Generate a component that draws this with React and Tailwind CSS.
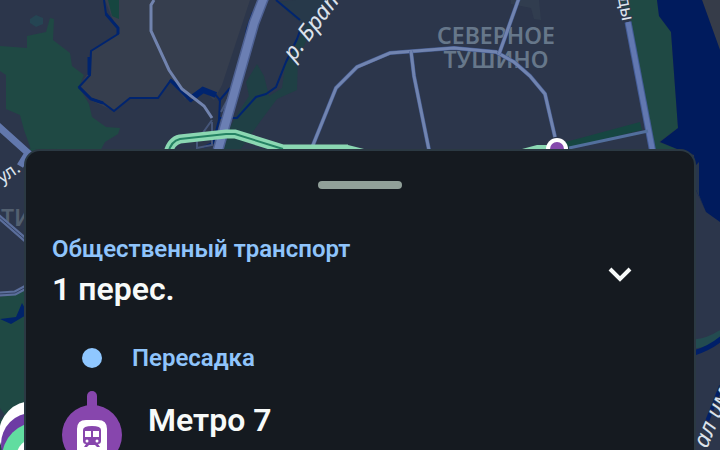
import React, { useState } from "react";

function RouteMap() {
  return (
    <svg
      className="absolute inset-0 h-full w-full"
      viewBox="0 0 720 450"
      preserveAspectRatio="xMidYMid slice"
      fill="none"
      role="img"
      aria-label="Карта маршрута"
    >
      <rect width="720" height="450" fill="#2c364b" />
      {/* built-up areas */}
      <path d="M105 0H250L222 85L214 100L203 90L185 99L171 80L158 98H130L114 111L90 100L79 87L90 70L91 51L118 33Z" fill="#363e4e" />
      <path d="M702 0H720V50Z" fill="#363c49" />
      <path d="M511 0H539L541 20L534 19L531 8L511 4Z" fill="#313d4f" />
      {/* parks */}
      <path d="M30 19L36 15L43 18V24L36 27L30 23Z" fill="#254553" />
      <path d="M0 46L27 48V36L46 32L50 18L54 19L53 40L70 53L72 66L84 75L79 87L89 104L92 117L106 127L120 128L118 134L105 142L98 155H33L24 130L20 115L6 109V75L0 71Z" fill="#1f4944" />
      <path d="M108 0H119V19L112 16Z" fill="#164640" />
      <path d="M257 64L264 76L269 96L282 88L285 66L298 40L304 30L301 22L290 14L279 2L335 -3L315 18L307 39L298 60L297 90L277 99L262 119L240 150H218L235 118L249 96L246 82Z" fill="#1f4045" />
      <path d="M304 30L301 22L290 14L279 2L320 -3L335 -3L315 18Z" fill="#27394a" />
      <path d="M620 0H657L659 16L671 32L678 128L659 142L677 149H652L631 20Z" fill="#1f4944" />
      <path d="M562 143L640 122L642 130L569 148Z" fill="#164641" />
      <path d="M33 148L80 150H24L28 280L0 297V450H24V150Z" fill="#1f4944" />
      <path d="M0 135L27 152V282L20 292L0 297Z" fill="#2c364b" />
      <path d="M0 408L5 415L0 420Z" fill="#2c364b" />
      {/* water */}
      <path d="M657 0H702L720 50V222L706 212L696 190L694 155L677 149L660 142L678 128L671 32L659 16Z" fill="#001b5d" />
      <path d="M706 212L696 190V165L699 162V195Z" fill="#28364c" />
      <path d="M0 319L16 317L22 303L28 314L11 324Z" fill="#00236a" />
      <path d="M694 344C706 343 713 340 722 334" stroke="#234b50" strokeWidth="9" />
      <path d="M694 353Q710 348 722 338" stroke="#001f69" strokeWidth="5" />
      <path d="M721 386L706 424" stroke="#001f69" strokeWidth="4" />
      <path d="M104 0L106 14L118 28V34L91 51L90 75L79 87L91 99L103 103L114 111L130 98H158L171 80L180 87L191 101L203 91L214 93L220 100L219 120L213 143L204 147" stroke="#00246f" strokeWidth="2" />
      <path d="M79 87L91 99L103 103M106 14L118 28V34M89 57V75M170 80L191 101" stroke="#00246f" strokeWidth="3" />
      <path d="M192 98L203 90L216 95" stroke="#00246f" strokeWidth="6" />
      <path d="M253 12L247 29L245 42M230 88L219 101M219 118H237L256 97L266 94L276 87L286 62L297 39L302 25M276 0L300 20" stroke="#00246f" strokeWidth="2" />
      {/* district names */}
      <g className="font-['Noto_Sans','Open_Sans',sans-serif]">
        <g className="text-[23px] leading-6 font-semibold" fill="#66778a" textAnchor="middle">
          <text x="496" y="44">СЕВЕРНОЕ</text>
          <text x="496" y="68">ТУШИНО</text>
        </g>
        <text className="text-[23px] font-semibold" x="1" y="226" fill="#536070">ТИНО</text>
      </g>
      {/* streets */}
      <path d="M154 0L151 5V31L169 70L182 89L204 106L212 118" stroke="#7183ae" strokeWidth="3" />
      <path d="M212 120L197 141V148L212 145V122M230 95L221 112" stroke="#46567a" strokeWidth="2" />
      <path d="M264 -3L254 23L218 150" stroke="#4e6193" strokeWidth="11" />
      <path d="M264 -3L254 23L218 150" stroke="#6b7fb3" strokeWidth="8" />
      <path d="M311 150L336 88L357 67L390 53L454 48L496 52L514 62L530 76L545 94L555 137" stroke="#455c91" strokeWidth="4" />
      <path d="M311 150L336 88L357 67L390 53L454 48L496 52L514 62L530 76L545 94L555 137" stroke="#7184b0" strokeWidth="3" />
      <path d="M411 51L414 76L429 150M519 -2L509 26L499 54" stroke="#455c91" strokeWidth="4" />
      <path d="M411 51L414 76L429 150M519 -2L509 26L499 54" stroke="#7184b0" strokeWidth="3" />
      <path d="M628 22L653 153" stroke="#445d98" strokeWidth="7" />
      <path d="M628 22L653 153" stroke="#6278b1" strokeWidth="5" />
      <path d="M569 148L648 131" stroke="#526f9d" strokeWidth="3" />
      <path d="M-3 125L28 153L20 166" stroke="#6278ad" strokeWidth="7" />
      <path d="M-2 216L28 242M-2 294L15 293L28 286" stroke="#5b6e9b" strokeWidth="5" />
      <path d="M-2 216L28 242M-2 294L15 293L28 286" stroke="#334264" strokeWidth="1" />
      {/* selected route */}
      <path d="M168 153Q171 141 180 139L226 134H235L283 149H348" stroke="#8bd7b2" strokeWidth="9" />
      <path d="M168 153Q171 141 180 139L226 134H235L283 149" stroke="#258263" strokeWidth="2" />
      <path d="M330 145H348L368 150H300Z" fill="#8bd7b2" />
      <path d="M522 149L537 145H550V150Z" fill="#8bd7b2" />
      <circle cx="557" cy="149" r="11" fill="#ffffff" />
      <circle cx="557" cy="149" r="7" fill="#8549ac" />
      <circle cx="32" cy="434" r="33" fill="#ffffff" />
      <circle cx="32" cy="444" r="31" fill="#6d3ca4" />
      <circle cx="38" cy="458" r="36" fill="#61dda0" />
      <circle cx="36" cy="458" r="20" fill="#ffffff" />
      {/* river and street names */}
      <g className="font-['Noto_Sans','Open_Sans',sans-serif]" fill="#dce3ec" stroke="#2c364b" strokeWidth="2" paintOrder="stroke">
        <text transform="translate(294 62) rotate(-53)" className="text-[23px] italic">р. Братовка</text>
        <text transform="translate(616 -11) rotate(79)" className="text-[18px]">зды</text>
        <text transform="translate(2 184) rotate(-34)" className="text-[18px]">ул.</text>
        <text transform="translate(707 449) rotate(-67)" className="text-[23px] italic">ал им. Москвы</text>
      </g>
    </svg>
  );
}

function TrainIcon() {
  return (
    <svg viewBox="0 0 30 30" className="h-[30px] w-[30px]" aria-hidden="true">
      <path d="M0 30V9Q0 0 9 0H21Q30 0 30 9V30Z" fill="#fff" />
      <path d="M6 10Q6 6 15 6Q24 6 24 10V21Q24 24 21 24L23 27H20L18 25H12L10 27H7L9 24Q6 24 6 21Z" fill="#8746ad" />
      <path d="M8 11H14V17H8ZM16 11H22V17H16Z" fill="#fff" />
      <circle cx="10" cy="21" r="1.5" fill="#fff" />
      <circle cx="20" cy="21" r="1.5" fill="#fff" />
    </svg>
  );
}

export default function App() {
  const [open, setOpen] = useState(true);
  return (
    <main className="relative h-screen overflow-hidden bg-[#2c364b] pt-[149px] font-[Roboto,sans-serif]">
      <RouteMap />
      <section className="relative mx-6 h-full rounded-t-2xl border-2 border-b-0 border-[#2b3943] bg-[#151a20] px-[26px] pt-[30px]">
        <div className="mx-auto h-2 w-[84px] rounded-full bg-[#91a099]" />
        <header className="mt-11 flex items-center justify-between pr-6">
          <div>
            <p className="text-2xl font-semibold text-[#8fc4fb]">Общественный транспорт</p>
            <h1 className="mt-1 text-[32px] leading-10 font-semibold text-[#f7faf9]">1 перес.</h1>
          </div>
          <button
            type="button"
            aria-label="Свернуть маршрут"
            aria-expanded={open}
            onClick={() => setOpen(!open)}
            className="flex size-12 items-end justify-center pb-3"
          >
            <svg viewBox="0 0 24 16" className="h-4 w-6" fill="none" aria-hidden="true">
              <path d="M2 2L12 12L22 2" stroke="#f7faf9" strokeWidth="4" />
            </svg>
          </button>
        </header>
        {open && (
          <ol className="mt-[33px]">
            <li className="flex items-center">
              <span className="flex w-20 justify-center">
                <span className="size-5 rounded-full bg-[#8fc7ff]" />
              </span>
              <span className="text-2xl font-semibold text-[#8fc4fb]">Пересадка</span>
            </li>
            <li className="mt-[17px] flex">
              <span className="flex w-20 flex-col items-center">
                <span className="-mb-1 h-[18px] w-[10px] rounded-t-full bg-[#8746ad]" />
                <span className="flex size-[60px] items-center justify-center rounded-full bg-[#8746ad]">
                  <TrainIcon />
                </span>
              </span>
              <span className="mt-[9px] ml-4 text-[32px] leading-10 font-semibold text-[#f7faf9]">Метро 7</span>
            </li>
          </ol>
        )}
      </section>
    </main>
  );
}
